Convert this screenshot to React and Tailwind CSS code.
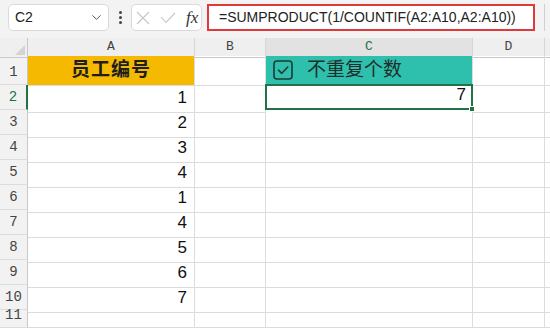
import { ChevronDown } from "lucide-react";

const cols = "grid grid-cols-[28px_167px_71px_207px_72px_1fr]";
const data = [1, 2, 3, 4, 1, 4, 5, 6, 7];

function RowHead({ n, active, h = "h-[25px]" }) {
  return (
    <div
      className={`${h} flex items-end justify-center pb-[1px] bg-[#f2f2f2] border-b border-[#dcdcdc] text-[14px] font-['Liberation_Mono',monospace] ${
        active ? "text-[#217346] border-r-2 border-r-[#217346] bg-[#e6e6e6]" : "text-[#444] border-r border-r-[#c8c8c8]"
      }`}
    >
      {n}
    </div>
  );
}

function Cell({ children, className = "" }) {
  return <div className={`border-r border-b border-[#dcdcdc] ${className}`}>{children}</div>;
}

export default function App() {
  return (
    <div className="w-[550px] h-[332px] overflow-hidden bg-white font-['Liberation_Sans','Noto_Sans_CJK_SC',sans-serif]">
      {/* toolbar */}
      <div className="h-[38px] bg-[#f3f3f3] flex items-start pt-[4px] pl-[8px]">
        <div className="w-[101px] h-[27px] bg-white border border-[#dadada] rounded-[5px] flex items-center justify-between pl-[6px] pr-[4px] text-[14px] text-[#222]">
          <span>C2</span>
          <ChevronDown size={15} strokeWidth={1.6} className="text-[#555]" />
        </div>
        <div className="w-[22px] h-[27px] flex flex-col items-center justify-center gap-[2px]">
          <span className="w-[3px] h-[3px] rounded-full bg-[#444]"></span>
          <span className="w-[3px] h-[3px] rounded-full bg-[#444]"></span>
          <span className="w-[3px] h-[3px] rounded-full bg-[#444]"></span>
        </div>
        <div className="w-[71px] h-[27px] bg-white border border-[#dadada] rounded-[5px] flex items-center pl-[4px] gap-[10px]">
          <svg width="14" height="14" viewBox="0 0 14 14" fill="none">
            <path d="M1 1 L13 13 M13 1 L1 13" stroke="#c6c6c6" strokeWidth="1.1" />
          </svg>
          <svg width="16" height="12" viewBox="0 0 16 12" fill="none">
            <path d="M1 5 L6 10.5 L15 1" stroke="#c6c6c6" strokeWidth="1.1" />
          </svg>
          <span className="text-[17px] italic font-['Liberation_Serif',serif] text-[#333]">fx</span>
        </div>
        <div className="ml-[5px] w-[328px] h-[27px] bg-white border-2 border-[#e0393b] flex items-center pl-[10px] text-[14px] text-[#222]">
          =SUMPRODUCT(1/COUNTIF(A2:A10,A2:A10))
        </div>
        <div className="ml-[9px] w-[1px] h-[27px] bg-[#d0d0d0]"></div>
      </div>

      {/* column header */}
      <div className={`${cols} h-[18px] bg-[#efefef] text-[13px] font-['Liberation_Mono',monospace] leading-[18px] text-[#444]`}>
        <div className="relative border-r border-b border-[#c8c8c8]">
          <svg className="absolute right-[2px] bottom-[2px]" width="10" height="10" viewBox="0 0 10 10">
            <path d="M10 0 L10 10 L0 10 Z" fill="#d4d4d4" />
          </svg>
        </div>
        <div className="text-center border-r border-b border-[#d6d6d6] border-b-[#c8c8c8]">A</div>
        <div className="text-center border-r border-b border-[#d6d6d6] border-b-[#c8c8c8]">B</div>
        <div className="text-center border-r border-[#d6d6d6] border-b-2 border-b-[#217346] bg-[#e2e2e2] text-[#217346]">C</div>
        <div className="text-center border-r border-b border-[#d6d6d6] border-b-[#c8c8c8]">D</div>
        <div className="border-b border-[#c8c8c8]"></div>
      </div>

      {/* row 1 */}
      <div className={`${cols} h-[29px]`}>
        <RowHead n={1} h="h-[29px]" />
        <Cell className="bg-[#f4b900] flex items-center justify-center text-[19px] font-bold text-[#1e1e1e] tracking-[1px]">
          员工编号
        </Cell>
        <Cell />
        <Cell className="bg-[#2fbfad] flex items-center pl-[7px] gap-[14px] text-[19px] text-[#1d2e2b]">
          <svg width="20" height="20" viewBox="0 0 20 20" fill="none">
            <rect x="1" y="1" width="18" height="18" rx="3" stroke="#1d3a35" strokeWidth="1.6" />
            <path d="M5.5 10.2 L8.8 13.3 L14.8 7" stroke="#1d3a35" strokeWidth="1.6" strokeLinecap="round" strokeLinejoin="round" />
          </svg>
          <span>不重复个数</span>
        </Cell>
        <Cell />
        <Cell className="border-r-0" />
      </div>

      {/* data rows */}
      {data.map((v, i) => (
        <div key={i} className={`${cols} h-[25px]`}>
          <RowHead n={i + 2} active={i === 0} />
          <Cell className="flex items-end justify-end pr-[7px] pb-[1px] text-[17px] text-[#111]">{v}</Cell>
          <Cell />
          {i === 0 ? (
            <div className="relative border-2 border-[#217346] -mt-[1px] -ml-[1px] h-[26px] flex items-end justify-end pr-[5px] pb-[1px] text-[17px] text-[#111]">
              7
              <span className="absolute -right-[4px] -bottom-[4px] w-[6px] h-[6px] bg-[#217346] border border-white"></span>
            </div>
          ) : (
            <Cell />
          )}
          <Cell />
          <Cell className="border-r-0" />
        </div>
      ))}

      {/* row 11 */}
      <div className={`${cols} h-[18px]`}>
        <RowHead n={11} h="h-[18px]" />
        <Cell />
        <Cell />
        <Cell />
        <Cell />
        <Cell className="border-r-0" />
      </div>
    </div>
  );
}
